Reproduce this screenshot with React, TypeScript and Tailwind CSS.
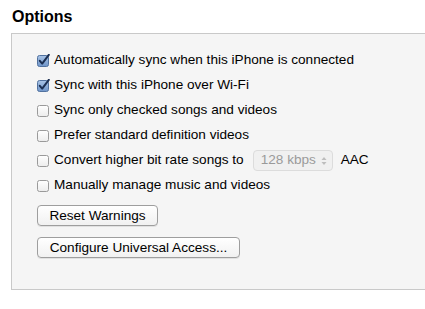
import React from "react";

function Box({ checked }: { checked: boolean }) {
  if (checked) {
    return (
      <svg width="13" height="13" viewBox="0 0 13 13" className="shrink-0">
        <defs>
          <linearGradient id="cb" x1="0" y1="0" x2="0" y2="1">
            <stop offset="0" stopColor="#a9c4e6" />
            <stop offset="1" stopColor="#6f95c9" />
          </linearGradient>
        </defs>
        <rect x="0.5" y="1.5" width="11" height="11" rx="2" fill="url(#cb)" stroke="#52729f" />
        <path d="M2.8 6.8 L5.2 9.6 L11.8 0.8" fill="none" stroke="#1b2f52" strokeWidth="2" strokeLinecap="round" strokeLinejoin="round" />
      </svg>
    );
  }
  return (
    <svg width="13" height="13" viewBox="0 0 13 13" className="shrink-0">
      <defs>
        <linearGradient id="cbu" x1="0" y1="0" x2="0" y2="1">
          <stop offset="0" stopColor="#ffffff" />
          <stop offset="1" stopColor="#ececec" />
        </linearGradient>
      </defs>
      <rect x="0.5" y="1.5" width="11" height="11" rx="2" fill="url(#cbu)" stroke="#9a9a9a" />
    </svg>
  );
}

function Row({ checked, children }: { checked: boolean; children: React.ReactNode }) {
  return (
    <div className="flex h-[25px] items-center gap-[4px]">
      <Box checked={checked} />
      <span>{children}</span>
    </div>
  );
}

export default function App() {
  return (
    <div
      className="h-[309px] w-[425px] overflow-hidden bg-white text-[13.6px] text-black"
      style={{ fontFamily: '"Liberation Sans", Arial, sans-serif' }}
    >
      <div className="pl-[12px] pt-[6px] text-[16px] font-bold leading-[21px] text-black">Options</div>
      <div className="ml-[11px] mt-[6px] h-[257px] border border-r-0 border-[#c9c9c9] bg-[#f5f5f5] pl-[25px] pt-[14px]">
        <Row checked>Automatically sync when this iPhone is connected</Row>
        <Row checked>Sync with this iPhone over Wi-Fi</Row>
        <Row checked={false}>Sync only checked songs and videos</Row>
        <Row checked={false}>Prefer standard definition videos</Row>
        <div className="flex h-[25px] items-center gap-[4px]">
          <Box checked={false} />
          <span>Convert higher bit rate songs to</span>
          <div className="ml-[5px] flex h-[21px] w-[80px] items-center justify-between rounded-[4px] border border-[#dcdcdc] bg-[#f0f0f0] pl-[7px] pr-[5px] text-[#9a9a9a]">
            <span>128 kbps</span>
            <svg width="6" height="10" viewBox="0 0 6 10">
              <path d="M0.5 4 L3 1 L5.5 4 Z" fill="#bdbdbd" />
              <path d="M0.5 6 L3 9 L5.5 6 Z" fill="#bdbdbd" />
            </svg>
          </div>
          <span className="ml-[4px]">AAC</span>
        </div>
        <Row checked={false}>Manually manage music and videos</Row>
        <div className="mt-[7px] flex flex-col items-start gap-[11px]">
          <button className="h-[21px] w-[121px] rounded-[4px] border border-[#9e9e9e] bg-gradient-to-b from-white to-[#f1f1f1] text-[13.6px] shadow-[0_1px_0_rgba(0,0,0,0.08)]">
            Reset Warnings
          </button>
          <button className="h-[21px] w-[203px] rounded-[4px] border border-[#9e9e9e] bg-gradient-to-b from-white to-[#f1f1f1] text-[13.6px] shadow-[0_1px_0_rgba(0,0,0,0.08)]">
            Configure Universal Access...
          </button>
        </div>
      </div>
    </div>
  );
}
